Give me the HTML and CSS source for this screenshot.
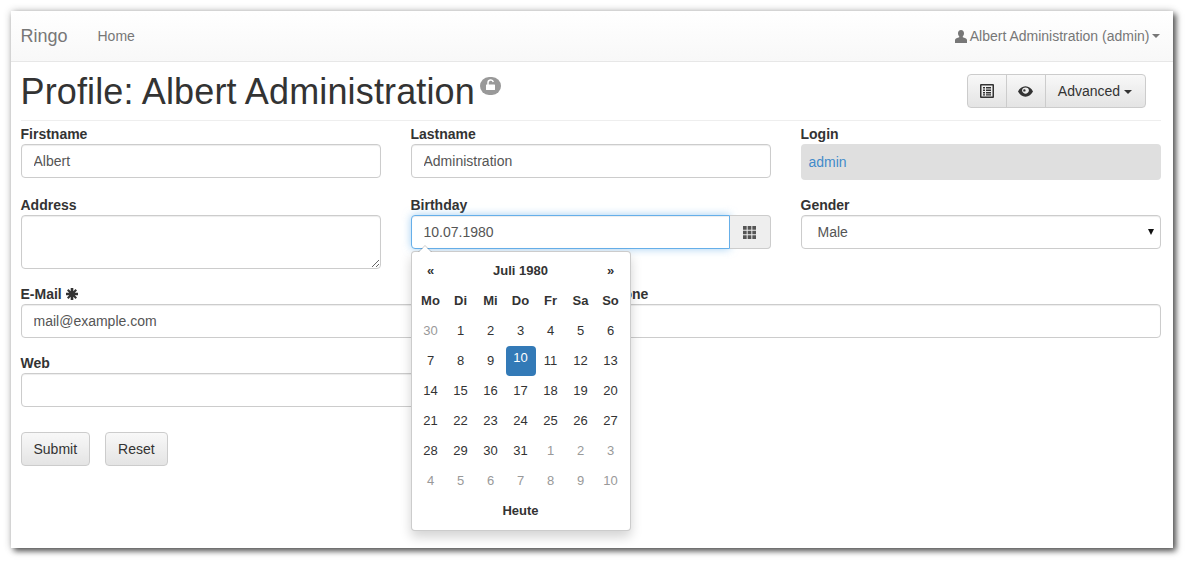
FILE: index.html
```html
<!DOCTYPE html>
<html lang="en">
<head>
    <meta charset="UTF-8">
    <title>Profile: Albert Administration</title>
    <link rel="stylesheet" href="styles.css">
</head>
<body>
<div class="window">
    <nav class="navbar">
        <a class="brand">Ringo</a>
        <a class="nav-link">Home</a>
        <a class="nav-user">
            <svg class="icon-user" viewBox="0 0 12 13"><path d="M6 0c1.900 0 3 1.400 3 3.300 0 1.300-.5 2.400-1.200 3v.9c1.700.5 4.200 1 4.200 2.900V13H0V10.100c0-1.900 2.500-2.400 4.200-2.900v-.9C3.500 5.700 3 4.600 3 3.300 3 1.400 4.100 0 6 0z"/></svg>
            Albert Administration (admin)<span class="caret"></span>
        </a>
    </nav>
    <div class="content">
        <header class="page-header">
            <h1>Profile: Albert Administration</h1>
            <span class="lock-badge">
                <svg viewBox="0 0 21 18"><rect x="0" y="0" width="21" height="18" rx="9" fill="#999"/><path d="M8 8V5.800a2.700 2.700 0 0 1 5.300-.8" fill="none" stroke="#fff" stroke-width="1.500"/><rect x="6" y="7.500" width="9" height="5.500" rx="0.600" fill="#fff"/></svg>
            </span>
            <div class="btn-group">
                <button class="btn btn-icon" type="button">
                    <svg class="icon-list" viewBox="0 0 14 14"><path fill-rule="evenodd" d="M1 0h12a1 1 0 0 1 1 1v12a1 1 0 0 1-1 1H1a1 1 0 0 1-1-1V1a1 1 0 0 1 1-1zM1.500 1.500v11h11v-11zM3 3h2v1.500H3zM6 3h5v1.500H6zM3 5.500h2V7H3zM6 5.500h5V7H6zM3 8h2v1.500H3zM6 8h5v1.500H6zM3 10.300h2v1.200H3zM6 10.300h5v1.200H6z"/></svg>
                </button>
                <button class="btn btn-icon" type="button">
                    <svg class="icon-eye" viewBox="0 0 16 11"><path fill-rule="evenodd" d="M8 0c3.500 0 6.300 2.300 8 5.500C14.300 8.700 11.500 11 8 11S1.700 8.700 0 5.500C1.700 2.300 4.500 0 8 0zM8 1.300c-1 0-1.900.3-2.700.8a3.500 3.500 0 1 0 5.400 0C9.900 1.600 9 1.300 8 1.300zM6.800 3a1.300 1.300 0 1 1 0 2.600 1.300 1.300 0 0 1 0-2.600z"/></svg>
                </button>
                <button class="btn btn-advanced" type="button">Advanced<span class="caret caret-dark"></span></button>
            </div>
        </header>

        <form>
            <div class="row">
                <div class="field">
                    <label>Firstname</label>
                    <input class="input" type="text" value="Albert">
                </div>
                <div class="field">
                    <label>Lastname</label>
                    <input class="input" type="text" value="Administration">
                </div>
                <div class="field">
                    <label>Login</label>
                    <div class="static-value"><a>admin</a></div>
                </div>
            </div>
            <div class="row">
                <div class="field">
                    <label>Address</label>
                    <textarea class="input textarea"></textarea>
                </div>
                <div class="field">
                    <label>Birthday</label>
                    <div class="input-group">
                        <input class="input input-focus" type="text" value="10.07.1980">
                        <span class="addon">
                            <svg class="icon-th" viewBox="0 0 12 12"><path d="M0 0h3.400v3.400H0zM4.300 0h3.400v3.400H4.300zM8.600 0H12v3.400H8.600zM0 4.300h3.400v3.400H0zM4.300 4.300h3.400v3.400H4.300zM8.600 4.300H12v3.400H8.600zM0 8.600h3.400V12H0zM4.300 8.600h3.400V12H4.300zM8.600 8.600H12V12H8.600z"/></svg>
                        </span>
                    </div>
                </div>
                <div class="field">
                    <label>Gender</label>
                    <div class="select-wrap">
                        <select class="input select">
                            <option>Male</option>
                            <option>Female</option>
                        </select>
                    </div>
                </div>
            </div>
            <div class="row">
                <div class="field">
                    <label>E-Mail <svg class="icon-asterisk" viewBox="0 0 12 12"><path d="M4.700 0h2.600v3.200L9.500 1l1.500 1.500-2.200 2.200H12v2.600H8.800L11 9.500 9.500 11 7.300 8.800V12H4.700V8.800L2.500 11 1 9.500l2.200-2.200H0V4.700h3.200L1 2.500 2.500 1l2.200 2.200z"/></svg></label>
                    <input class="input" type="text" value="mail@example.com">
                </div>
                <div class="field">
                    <label>Phone</label>
                    <input class="input" type="text">
                </div>
            </div>
            <div class="row">
                <div class="field">
                    <label>Web</label>
                    <input class="input" type="text">
                </div>
                <div class="field"></div>
            </div>
            <div class="actions">
                <button class="btn" type="button">Submit</button>
                <button class="btn" type="button">Reset</button>
            </div>
        </form>
    </div>

    <div class="datepicker">
        <table>
            <tr class="cal-head"><th>«</th><th colspan="5">Juli 1980</th><th>»</th></tr>
            <tr class="cal-head"><th>Mo</th><th>Di</th><th>Mi</th><th>Do</th><th>Fr</th><th>Sa</th><th>So</th></tr>
            <tr><td class="old">30</td><td>1</td><td>2</td><td>3</td><td>4</td><td>5</td><td>6</td></tr>
            <tr><td>7</td><td>8</td><td>9</td><td class="active">10</td><td>11</td><td>12</td><td>13</td></tr>
            <tr><td>14</td><td>15</td><td>16</td><td>17</td><td>18</td><td>19</td><td>20</td></tr>
            <tr><td>21</td><td>22</td><td>23</td><td>24</td><td>25</td><td>26</td><td>27</td></tr>
            <tr><td>28</td><td>29</td><td>30</td><td>31</td><td class="old">1</td><td class="old">2</td><td class="old">3</td></tr>
            <tr><td class="old">4</td><td class="old">5</td><td class="old">6</td><td class="old">7</td><td class="old">8</td><td class="old">9</td><td class="old">10</td></tr>
            <tr class="cal-head"><th colspan="7">Heute</th></tr>
        </table>
    </div>
</div>
</body>
</html>
```

FILE: styles.css
```css
* {
    box-sizing: border-box;
}
html, body {
    height: 100%;
}
body {
    margin: 0;
    padding: 11px 19px 19px 11px;
    background-color: #fff;
    font-family: "Liberation Sans", Arial, sans-serif;
    font-size: 14px;
    line-height: 20px;
    color: #333;
    overflow: hidden;
}
.window {
    position: relative;
    height: 537px;
    background-color: #fff;
    box-shadow: 3px 3px 6px rgba(0, 0, 0, 0.65), 0 0 8px rgba(0, 0, 0, 0.2);
}

/* navbar */
.navbar {
    display: flex;
    align-items: center;
    height: 51px;
    padding: 0 13.5px 0 9.5px;
    background: linear-gradient(to bottom, #fff, #f8f8f8);
    border-bottom: 1px solid #e7e7e7;
    color: #777;
}
.brand {
    font-size: 18px;
    width: 77px;
}
.nav-user {
    margin-left: auto;
    display: flex;
    align-items: center;
}
.icon-user {
    width: 12px;
    height: 13px;
    fill: #777;
    margin-right: 3px;
}
.caret {
    display: inline-block;
    width: 0;
    height: 0;
    margin-left: 2px;
    border-top: 4px solid #777;
    border-left: 4px solid transparent;
    border-right: 4px solid transparent;
}
.caret-dark {
    border-top-color: #333;
    margin-left: 4px;
    vertical-align: middle;
}

/* page header */
.content {
    padding: 0 12.5px 0 9.5px;
}
.page-header {
    display: flex;
    height: 59px;
    padding-top: 10px;
    border-bottom: 1px solid #eee;
    margin-bottom: 3px;
}
h1 {
    margin: 0;
    font-size: 36px;
    font-weight: 500;
    line-height: 40px;
    letter-spacing: 0.14px;
}
.lock-badge {
    margin: 5px 0 0 5px;
}
.lock-badge svg {
    display: block;
    width: 21px;
    height: 18px;
}
.btn-group {
    display: flex;
    height: 34px;
    margin: 2px 15px 0 auto;
}
.btn {
    height: 34px;
    padding: 6px 12px;
    font: inherit;
    color: #333;
    background: linear-gradient(to bottom, #f8f8f8, #e4e4e4);
    border: 1px solid #ccc;
    border-radius: 4px;
    cursor: pointer;
}
.btn-group .btn {
    border-radius: 0;
    margin-left: -1px;
}
.btn-group .btn:first-child {
    border-radius: 4px 0 0 4px;
    margin-left: 0;
}
.btn-group .btn:last-child {
    border-radius: 0 4px 4px 0;
}
.btn-icon {
    width: 40px;
    display: flex;
    align-items: center;
    justify-content: center;
    padding: 0;
}
.icon-list {
    width: 14px;
    height: 14px;
    fill: #333;
}
.icon-eye {
    width: 15px;
    height: 11px;
    fill: #333;
}
.btn-advanced {
    width: 101px;
}

/* form */
.row {
    display: flex;
    gap: 30px;
    margin-bottom: 15px;
}
.field {
    flex: 1;
    min-width: 0;
}
label {
    display: block;
    font-weight: bold;
}
.icon-asterisk {
    width: 12px;
    height: 12px;
    fill: #333;
    vertical-align: -1px;
}
.input {
    display: block;
    width: 100%;
    height: 34px;
    padding: 6px 12px;
    font: inherit;
    color: #555;
    background-color: #fff;
    border: 1px solid #ccc;
    border-radius: 4px;
    box-shadow: inset 0 1px 1px rgba(0, 0, 0, 0.075);
}
.textarea {
    height: 54px;
    resize: vertical;
}
.select-wrap {
    position: relative;
}
.select-wrap::after {
    content: "";
    position: absolute;
    right: 6.5px;
    top: 14px;
    border-top: 6px solid #111;
    border-left: 3px solid transparent;
    border-right: 3px solid transparent;
    pointer-events: none;
}
.select {
    padding-left: 16px;
    appearance: none;
}
.input-group {
    display: flex;
}
.input-focus {
    flex: 1;
    min-width: 0;
    border-color: #66afe9;
    border-radius: 4px 0 0 4px;
    box-shadow: inset 0 1px 1px rgba(0, 0, 0, 0.075), 0 0 8px rgba(102, 175, 233, 0.6);
}
.addon {
    display: flex;
    align-items: center;
    justify-content: center;
    width: 41px;
    background-color: #eee;
    border: 1px solid #ccc;
    border-left: 0;
    border-radius: 0 4px 4px 0;
}
.icon-th {
    width: 13px;
    height: 13px;
    fill: #555;
}
.static-value {
    height: 36px;
    padding: 8px;
    background-color: #dfdfdf;
    border-radius: 4px;
    color: #428bca;
}
.actions {
    display: flex;
    gap: 15px;
    margin-top: 25px;
}

/* calendar popup */
.datepicker {
    position: absolute;
    left: 400px;
    top: 240px;
    width: 220px;
    padding: 4px 4.5px 4px 3.5px;
    background-color: #fff;
    border: 1px solid rgba(0, 0, 0, 0.2);
    border-radius: 4px;
    box-shadow: 0 6px 12px rgba(0, 0, 0, 0.175);
}
.datepicker::before {
    content: "";
    position: absolute;
    top: -7px;
    left: 6px;
    border-left: 7px solid transparent;
    border-right: 7px solid transparent;
    border-bottom: 7px solid rgba(0, 0, 0, 0.2);
}
.datepicker::after {
    content: "";
    position: absolute;
    top: -6px;
    left: 7px;
    border-left: 6px solid transparent;
    border-right: 6px solid transparent;
    border-bottom: 6px solid #fff;
}
.datepicker table {
    border-collapse: collapse;
    font-size: 13px;
}
.datepicker th, .datepicker td {
    width: 30px;
    height: 30px;
    padding: 0;
    text-align: center;
}
.datepicker .old {
    color: #999;
}
.datepicker .active {
    padding-bottom: 6px;
    background-color: #337ab7;
    color: #fff;
    border-radius: 4px;
}
```
